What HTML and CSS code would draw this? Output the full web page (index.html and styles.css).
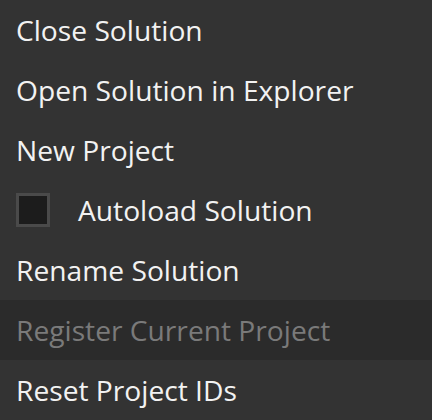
FILE: index.html
```html
<!DOCTYPE html>
<html>
<head>
<meta charset="utf-8">
<link rel="stylesheet" href="styles.css">
</head>
<body>
<div class="menu">
  <div class="item">Close Solution</div>
  <div class="item">Open Solution in Explorer</div>
  <div class="item">New Project</div>
  <div class="item check"><span class="box"></span><span>Autoload Solution</span></div>
  <div class="item">Rename Solution</div>
  <div class="item disabled">Register Current Project</div>
  <div class="item">Reset Project IDs</div>
</div>
</body>
</html>
```
FILE: styles.css
```css
html, body {
  margin: 0;
  padding: 0;
  background: #333333;
}
.menu {
  width: 432px;
  height: 420px;
  display: flex;
  flex-direction: column;
  font-family: "Open Sans", "Noto Sans", sans-serif;
  font-size: 28.2px;
  color: #f2f2f2;
}
.item {
  height: 60px;
  display: flex;
  align-items: center;
  padding-left: 16px;
  white-space: nowrap;
}
.check {
  gap: 28px;
}
.box {
  width: 28px;
  height: 28px;
  border: 3px solid #4a4a4a;
  background: #1c1c1c;
}
.disabled {
  background: #2b2b2b;
  color: #7a7a7a;
}
```
